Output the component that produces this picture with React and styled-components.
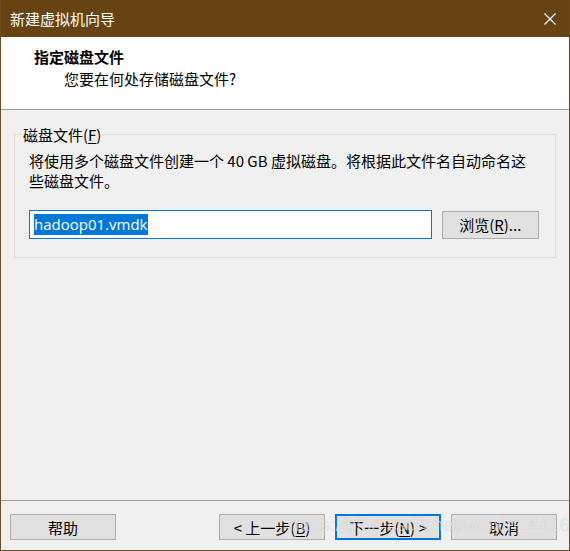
import styled, { createGlobalStyle } from "styled-components";

const GlobalStyle = createGlobalStyle`
  html, body {
    margin: 0;
    padding: 0;
    background: #f0f0f0;
  }
  * {
    box-sizing: border-box;
  }
`;

const FONT = `"Noto Sans CJK SC", "Noto Sans", sans-serif`;

const Window = styled.div`
  position: relative;
  width: 570px;
  height: 551px;
  display: flex;
  flex-direction: column;
  background: #f0f0f0;
  border: 1px solid #6e4c1e;
  border-top: none;
  font-family: ${FONT};
  font-size: 15px;
  color: #000;
  overflow: hidden;
`;

const TitleBar = styled.div`
  height: 37px;
  margin: 0 -1px;
  background: #674212;
  display: flex;
  align-items: center;
  justify-content: space-between;
  padding: 0 14px 0 10px;
  color: #fff;
  font-size: 15px;
  flex-shrink: 0;
`;

const CloseIcon = styled.svg`
  width: 12px;
  height: 12px;
  display: block;
`;

const Header = styled.div`
  height: 73px;
  background: #fff;
  border-bottom: 1px solid #a0a0a0;
  padding: 9px 0 0 33px;
  flex-shrink: 0;
`;

const HeaderTitle = styled.div`
  font-size: 15px;
  font-weight: bold;
  line-height: 22px;
`;

const HeaderSub = styled.div`
  padding-left: 30px;
  line-height: 22px;
`;

const Content = styled.div`
  flex: 1;
  padding: 14px 13px 0 13px;
`;

const Group = styled.fieldset`
  margin: 0;
  border: 1px solid #dcdcdc;
  padding: 6px 16px 18px 14px;
  min-width: 0;
`;

const Legend = styled.legend`
  padding: 0 1px;
  margin-left: -7px;
  line-height: 21px;
`;

const Mnemonic = styled.span`
  text-decoration: underline;
  text-underline-offset: 2px;
`;

const Description = styled.p`
  margin: 0;
  line-height: 20px;
`;

const FileRow = styled.div`
  display: flex;
  align-items: center;
  gap: 10px;
  margin-top: 19px;
`;

const FileInput = styled.div`
  width: 405px;
  height: 29px;
  background: #fff;
  border: 1px solid #0078d7;
  display: flex;
  align-items: center;
  padding-left: 4px;
`;

const Selected = styled.span`
  background: #0078d7;
  color: #fff;
  font-family: "Open Sans", "Noto Sans", sans-serif;
  font-size: 15px;
  line-height: 21px;
  padding-right: 1px;
`;

const Button = styled.div`
  width: ${(p) => p.$w || 106}px;
  height: ${(p) => p.$h || 26}px;
  background: #e1e1e1;
  border: ${(p) => (p.$primary ? "2px solid #0078d7" : "1px solid #adadad")};
  display: flex;
  align-items: center;
  justify-content: center;
  font-size: 15px;
  line-height: 1;
`;

const Footer = styled.div`
  height: 50px;
  border-top: 1px solid #a0a0a0;
  display: flex;
  align-items: flex-start;
  padding: 13px 12px 0 9px;
  flex-shrink: 0;
`;

const Spacer = styled.div`
  flex: 1;
`;

const NavGroup = styled.div`
  display: flex;
  gap: 10px;
`;

const Watermark = styled.div`
  position: absolute;
  left: 288px;
  top: 514px;
  font-family: "Liberation Sans", sans-serif;
  font-size: 19px;
  color: rgba(255, 255, 255, 0.5);
  text-shadow: 0 0 1px rgba(120, 120, 120, 0.3);
  pointer-events: none;
  white-space: nowrap;
`;

export default function App() {
  return (
    <>
      <GlobalStyle />
      <Window>
        <TitleBar>
          <span>新建虚拟机向导</span>
          <CloseIcon viewBox="0 0 12 12">
            <path d="M0.5 0.5L11.5 11.5M11.5 0.5L0.5 11.5" stroke="#fff" strokeWidth="1.2" />
          </CloseIcon>
        </TitleBar>
        <Header>
          <HeaderTitle>指定磁盘文件</HeaderTitle>
          <HeaderSub>您要在何处存储磁盘文件?</HeaderSub>
        </Header>
        <Content>
          <Group>
            <Legend>
              磁盘文件(<Mnemonic>F</Mnemonic>)
            </Legend>
            <Description>
              将使用多个磁盘文件创建一个 40 GB 虚拟磁盘。将根据此文件名自动命名这些磁盘文件。
            </Description>
            <FileRow>
              <FileInput>
                <Selected>hadoop01.vmdk</Selected>
              </FileInput>
              <Button $w={98} $h={28}>
                浏览(<Mnemonic>R</Mnemonic>)...
              </Button>
            </FileRow>
          </Group>
        </Content>
        <Footer>
          <Button>帮助</Button>
          <Spacer />
          <NavGroup>
            <Button>
              &lt; 上一步(<Mnemonic>B</Mnemonic>)
            </Button>
            <Button $primary>
              下一步(<Mnemonic>N</Mnemonic>) &gt;
            </Button>
            <Button>取消</Button>
          </NavGroup>
        </Footer>
        <Watermark>https://blog.csdn.net/weixin_44166534</Watermark>
      </Window>
    </>
  );
}
